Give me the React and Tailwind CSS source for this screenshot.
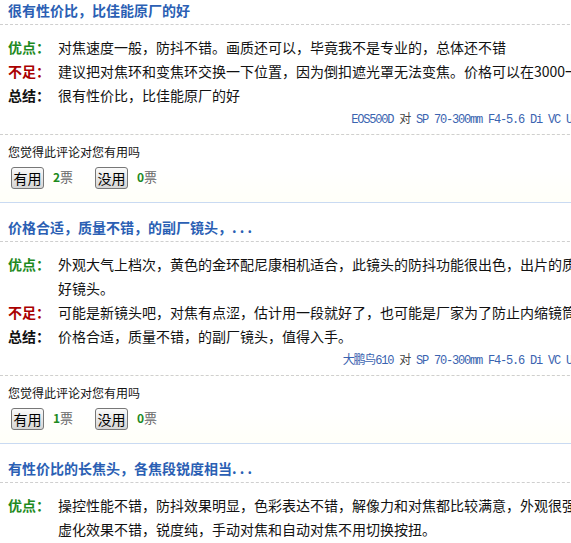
const reviews = [
  {
    title: "很有性价比，比佳能原厂的好",
    pros: ["对焦速度一般，防抖不错。画质还可以，毕竟我不是专业的，总体还不错"],
    cons: ["建议把对焦环和变焦环交换一下位置，因为倒扣遮光罩无法变焦。价格可以在3000一3500之间"],
    sum: ["很有性价比，比佳能原厂的好"],
    camera: "EOS500D",
    lens: "SP 70-300mm F4-5.6 Di VC USD",
    up: 2,
    down: 0,
  },
  {
    title: "价格合适，质量不错，的副厂镜头，. . .",
    pros: ["外观大气上档次，黄色的金环配尼康相机适合，此镜头的防抖功能很出色，出片的质量也不错，是", "好镜头。"],
    cons: ["可能是新镜头吧，对焦有点涩，估计用一段就好了，也可能是厂家为了防止内缩镜筒滑落"],
    sum: ["价格合适，质量不错，的副厂镜头，值得入手。"],
    camera: "大鹏鸟610",
    lens: "SP 70-300mm F4-5.6 Di VC USD",
    up: 1,
    down: 0,
  },
  {
    title: "有性价比的长焦头，各焦段锐度相当. . .",
    pros: ["操控性能不错，防抖效果明显，色彩表达不错，解像力和对焦都比较满意，外观很强悍", "虚化效果不错，锐度纯，手动对焦和自动对焦不用切换按扭。"],
    cons: ["暂时没有发现"],
    sum: ["值得购买"],
    camera: "D90",
    lens: "SP 70-300mm F4-5.6 Di VC USD",
    up: 0,
    down: 0,
  },
];

function Row({ label, color, lines }) {
  return (
    <div className="flex text-[14px] leading-[24px]">
      <span className={`w-[50px] shrink-0 font-bold ${color}`}>{label}</span>
      <div className="whitespace-nowrap text-[#111]">
        {lines.map((l, i) => (
          <div key={i}>{l}</div>
        ))}
      </div>
    </div>
  );
}

function VoteButton({ children }) {
  return (
    <button className="h-[22px] w-[33px] rounded-[3px] border border-[#777] bg-gradient-to-b from-[#fafafa] to-[#d6d6d6] text-[14px] leading-[20px] text-black">
      {children}
    </button>
  );
}

function Review({ r }) {
  return (
    <div className="border-b border-[#c9daf2]">
      <div className="px-2 pt-[16px] pb-[6px] text-[14px] font-bold leading-[16px] text-[#2b5fb4] whitespace-nowrap">
        {r.title}
      </div>
      <div className="border-t border-dashed border-[#cfcfcf] px-2 pt-[10px]">
        <Row label="优点：" color="text-[#1e8a1e]" lines={r.pros} />
        <Row label="不足：" color="text-[#aa0000]" lines={r.cons} />
        <Row label="总结：" color="text-[#111]" lines={r.sum} />
        <div className="mt-[5px] pb-[6px] pr-[8px] text-right text-[12px] leading-[16px] tracking-[-1.2px] whitespace-nowrap" style={{ fontFamily: '"Liberation Mono", "Noto Sans CJK SC", monospace' }}>
          <span className="text-[#3a63b0]">{r.camera}</span>
          <span className="text-[#444]"> 对 </span>
          <span className="text-[#3a63b0]">{r.lens}</span>
        </div>
      </div>
      <div className="border-t border-dashed border-[#cfcfcf] bg-gradient-to-b from-white via-white to-[#fffff8] px-2 pt-[9px] pb-[13px]">
        <div className="text-[12px] leading-[16px] text-[#111]">您觉得此评论对您有用吗</div>
        <div className="mt-[7px] flex items-center pl-[3px] text-[13px]">
          <VoteButton>有用</VoteButton>
          <span className="ml-[9px] w-[42px] -mt-[3px]">
            <b className="text-[12px] text-[#1e8a1e]">{r.up}</b>
            <span className="text-[#666]">票</span>
          </span>
          <VoteButton>没用</VoteButton>
          <span className="ml-[9px] -mt-[3px]">
            <b className="text-[12px] text-[#1e8a1e]">{r.down}</b>
            <span className="text-[#666]">票</span>
          </span>
        </div>
      </div>
    </div>
  );
}

export default function App() {
  return (
    <div className="h-[543px] w-[571px] overflow-hidden bg-white" style={{ fontFamily: '"Noto Sans CJK SC", "Liberation Sans", sans-serif' }}>
      <div className="-mt-[14px] w-[600px]">
        {reviews.map((r, i) => (
          <Review key={i} r={r} />
        ))}
      </div>
    </div>
  );
}
